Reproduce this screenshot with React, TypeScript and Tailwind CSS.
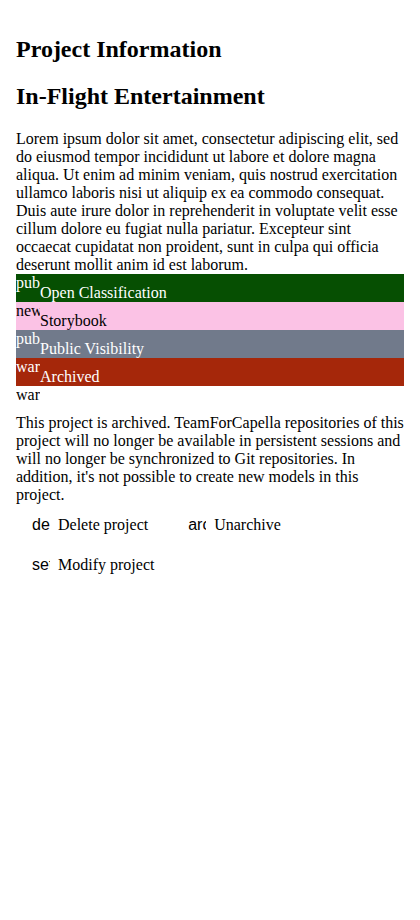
const badges = [
  { icon: "public", label: "Open Classification", cls: "bg-[#064f02] text-white" },
  { icon: "new_releases", label: "Storybook", cls: "bg-[#fbc2e5] text-black" },
  { icon: "public", label: "Public Visibility", cls: "bg-[#717a8b] text-white" },
  { icon: "warning", label: "Archived", cls: "bg-[#a5270a] text-white" },
];

const actions = [
  { icon: "delete", label: "Delete project" },
  { icon: "archive", label: "Unarchive" },
  { icon: "settings", label: "Modify project" },
];

function Icon({ name }: { name: string }) {
  return <span className="inline-block w-6 h-6 overflow-hidden whitespace-nowrap">{name}</span>;
}

export default function App() {
  return (
    <div className="min-h-screen bg-white px-4 pt-px text-black font-['Liberation_Serif',serif] text-base leading-[normal]">
      {/* header */}
      <h2 className="mt-[35px] mb-[19.92px] text-2xl font-bold leading-[normal]">Project Information</h2>
      <h2 className="mb-[19.92px] text-2xl font-bold leading-[normal]">In-Flight Entertainment</h2>
      <div>
        Lorem ipsum dolor sit amet, consectetur adipiscing elit, sed do eiusmod tempor incididunt ut labore et
        dolore magna aliqua. Ut enim ad minim veniam, quis nostrud exercitation ullamco laboris nisi ut aliquip ex ea
        commodo consequat. Duis aute irure dolor in reprehenderit in voluptate velit esse cillum dolore eu fugiat
        nulla pariatur. Excepteur sint occaecat cupidatat non proident, sunt in culpa qui officia deserunt mollit
        anim id est laborum.
      </div>

      {/* tags */}
      <div>
        {badges.map((b) => (
          <div key={b.label} className={b.cls}>
            <Icon name={b.icon} />
            {b.label}
          </div>
        ))}
      </div>

      <div>
        <Icon name="warning" />
      </div>
      <p>
        This project is archived. TeamForCapella repositories of this project will no longer be available in
        persistent sessions and will no longer be synchronized to Git repositories. In addition, it's not possible
        to create new models in this project.
      </p>

      {/* actions */}
      <div className="mt-[3px] flex flex-wrap gap-x-2 gap-y-1">
        {actions.map((a) => (
          <button key={a.label} className="flex h-9 items-center gap-2 px-4">
            <span className="inline-block w-[18px] overflow-hidden whitespace-nowrap font-['Liberation_Sans',sans-serif]">
              {a.icon}
            </span>
            {a.label}
          </button>
        ))}
      </div>
    </div>
  );
}
